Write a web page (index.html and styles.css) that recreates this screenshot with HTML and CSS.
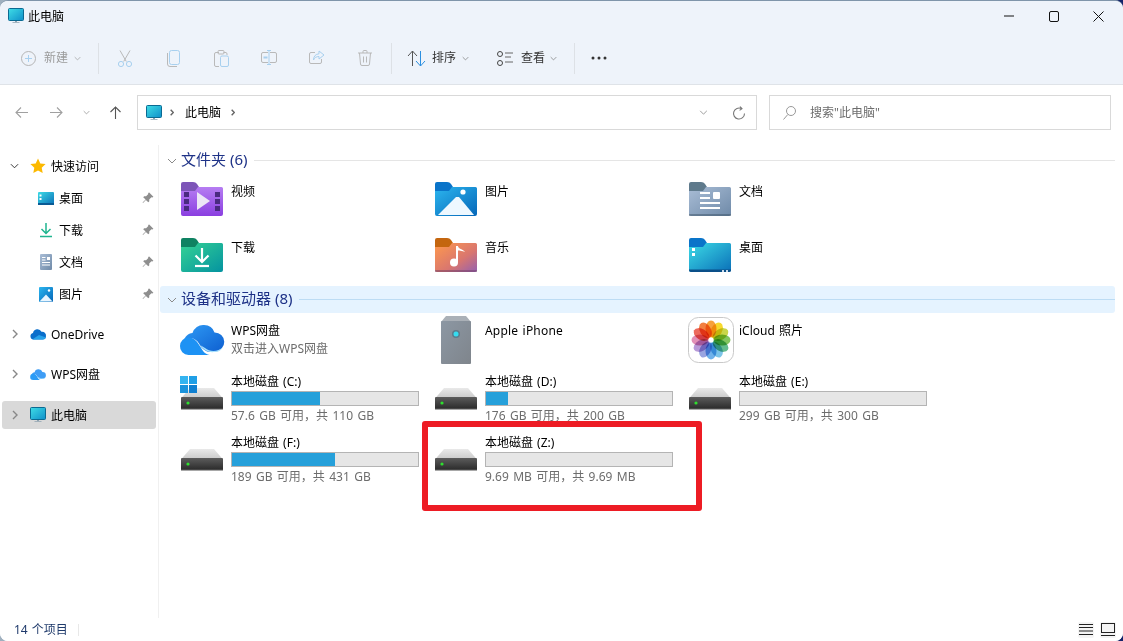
FILE: index.html
```html
<!DOCTYPE html>
<html lang="zh-CN">
<head>
<meta charset="utf-8">
<title>此电脑</title>
<link rel="stylesheet" href="styles.css">
</head>
<body>
<svg class="defs" width="0" height="0" aria-hidden="true">
  <defs>
    <linearGradient id="gPc" x1="0" y1="0" x2="1" y2="1"><stop offset="0" stop-color="#3fdde6"/><stop offset="1" stop-color="#0f8fc9"/></linearGradient>
    <linearGradient id="gDesk" x1="0" y1="0" x2="1" y2="1"><stop offset="0" stop-color="#3cdbe6"/><stop offset="1" stop-color="#0a6fb8"/></linearGradient>
    <linearGradient id="gVid" x1="0" y1="0" x2="0" y2="1"><stop offset="0" stop-color="#b67df2"/><stop offset="1" stop-color="#8a3fe0"/></linearGradient>
    <linearGradient id="gPic" x1="0" y1="0" x2="1" y2="1"><stop offset="0" stop-color="#2cb6ef"/><stop offset="1" stop-color="#0566b8"/></linearGradient>
    <linearGradient id="gDoc" x1="0" y1="0" x2="1" y2="1"><stop offset="0" stop-color="#a9bdd6"/><stop offset="1" stop-color="#6f8aa8"/></linearGradient>
    <linearGradient id="gDl" x1="0" y1="0" x2="1" y2="1"><stop offset="0" stop-color="#35d294"/><stop offset="1" stop-color="#0493a0"/></linearGradient>
    <linearGradient id="gMus" x1="0" y1="0" x2="1" y2="1"><stop offset="0" stop-color="#ff9a4c"/><stop offset=".6" stop-color="#d9766f"/><stop offset="1" stop-color="#9460b0"/></linearGradient>
    <linearGradient id="gDrv" x1="0" y1="0" x2="0" y2="1"><stop offset="0" stop-color="#5c5c5c"/><stop offset="1" stop-color="#262626"/></linearGradient>
    <linearGradient id="gTop" x1="0" y1="0" x2="0" y2="1"><stop offset="0" stop-color="#e9e9e9"/><stop offset="1" stop-color="#c9c9c9"/></linearGradient>
    <linearGradient id="gTow" x1="0" y1="0" x2="1" y2="1"><stop offset="0" stop-color="#8c97a3"/><stop offset="1" stop-color="#7f858c"/></linearGradient>
    <linearGradient id="gCloud" x1="0" y1="0" x2="1" y2="1"><stop offset="0" stop-color="#2f9bf5"/><stop offset="1" stop-color="#0e5fd0"/></linearGradient>
    <symbol id="pc" viewBox="0 0 16 16">
      <path d="M7 12.5h2v1.6H7zM4.5 14.2h7v.8h-7z" fill="#8ea2b0"/>
      <rect x=".5" y=".5" width="15" height="12" rx="1" fill="url(#gPc)" stroke="#0b6a92"/>
    </symbol>
    <symbol id="chev-d" viewBox="0 0 10 6"><path d="M1 1l4 4 4-4" fill="none" stroke="currentColor" stroke-width="1"/></symbol>
    <symbol id="chev-r" viewBox="0 0 6 10"><path d="M1 1l4 4-4 4" fill="none" stroke="currentColor" stroke-width="1.4"/></symbol>
    <symbol id="crumb-r" viewBox="0 0 6 10"><path d="M1 1l4 4-4 4" fill="none" stroke="currentColor" stroke-width="2.200"/></symbol>
    <symbol id="pin" viewBox="0 0 12 12"><path d="M7.2.6l4.2 4.2-1 .7-1-.2-2.2 2.2.1 1.8-1 1L3.9 7.9 1 11 .6 10.6 3.6 7.6 1.2 5.2l1-1 1.9.1 2.2-2.2-.2-1z" fill="#8e8e8e"/></symbol>
    <symbol id="drive" viewBox="0 0 42 22">
      <path d="M9 0h24l9 10.500H0z" fill="url(#gTop)"/>
      <rect y="9" width="42" height="13" rx="1" fill="url(#gDrv)"/>
      <rect x="0" y="20.800" width="42" height="1.200" fill="#a8a8a8"/>
      <circle cx="7" cy="15" r="1.600" fill="#2ee02e"/>
    </symbol>
  </defs>
</svg>

<div class="window">
  <header class="titlebar">
    <svg class="ico16"><use href="#pc"/></svg>
    <span class="title-text">此电脑</span>
    <div class="win-controls">
      <span class="win-btn"><svg width="10" height="10" viewBox="0 0 10 10"><path d="M0 5h10" stroke="#111" stroke-width="1"/></svg></span>
      <span class="win-btn"><svg width="10" height="11" viewBox="0 0 10 11"><rect x=".5" y=".5" width="9" height="10" rx="1.500" fill="none" stroke="#111"/></svg></span>
      <span class="win-btn"><svg width="11" height="11" viewBox="0 0 11 11"><path d="M.5.5l10 10M10.500.5l-10 10" stroke="#111" stroke-width="1"/></svg></span>
    </div>
  </header>

  <div class="toolbar">
    <div class="tb-new">
      <svg width="15" height="15" viewBox="0 0 15 15"><circle cx="7.500" cy="7.500" r="7" fill="none" stroke="#b5b5b5"/><path d="M7.500 4v7M4 7.500h7" stroke="#a8d0ef"/></svg>
      <span class="tb-label dim">新建</span>
      <svg class="tb-chev dim" width="7" height="5"><use href="#chev-d"/></svg>
    </div>
    <span class="tb-sep sep-a"></span>
    <div class="tb-icons">
      <span class="tb-icon"><svg width="16" height="17" viewBox="0 0 16 17"><path d="M3 .5l6.300 11M13 .5L6.700 11.500" fill="none" stroke="#b9b9b9"/><circle cx="4" cy="14" r="2.600" fill="none" stroke="#a8d0ef"/><circle cx="12" cy="14" r="2.600" fill="none" stroke="#a8d0ef"/></svg></span>
      <span class="tb-icon"><svg width="13" height="17" viewBox="0 0 13 17"><path d="M.5 3v11a2.500 2.500 0 0 0 2.500 2.500h7" fill="none" stroke="#b9b9b9"/><rect x="2.500" y=".5" width="10" height="14" rx="2" fill="none" stroke="#a8d0ef"/></svg></span>
      <span class="tb-icon"><svg width="15" height="17" viewBox="0 0 15 17"><path d="M5 2.500H2a1.500 1.500 0 0 0-1.500 1.500v11A1.500 1.500 0 0 0 2 16.500h3M9.500 2.500H12A1.500 1.500 0 0 1 13 4v1" fill="none" stroke="#b9b9b9"/><rect x="4" y=".5" width="6" height="3.500" rx="1" fill="none" stroke="#b9b9b9"/><rect x="6.500" y="6" width="8" height="10.500" rx="1.500" fill="none" stroke="#a8d0ef"/></svg></span>
      <span class="tb-icon"><svg width="16" height="15" viewBox="0 0 16 15"><path d="M9 2.500h5a1.500 1.500 0 0 1 1.500 1.500v7a1.500 1.500 0 0 1-1.500 1.500H9M7 2.500H2A1.500 1.500 0 0 0 .5 4v7A1.500 1.500 0 0 0 2 12.500h5" fill="none" stroke="#b9b9b9"/><path d="M8 .5v14M6 .5h4M6 14.500h4" fill="none" stroke="#a8d0ef"/><rect x="2.500" y="6.500" width="4" height="2" fill="#a8d0ef"/></svg></span>
      <span class="tb-icon"><svg width="16" height="15" viewBox="0 0 16 15"><path d="M6 2.500H2A1.500 1.500 0 0 0 .5 4v8A1.500 1.500 0 0 0 2 13.500h9a1.500 1.500 0 0 0 1.500-1.500V9" fill="none" stroke="#b9b9b9"/><path d="M10 1l5 4-5 4V6.500C7.500 6.500 5.500 7.500 4.500 10c0-3.500 2-6 5.500-6.200z" fill="none" stroke="#a8d0ef"/></svg></span>
      <span class="tb-icon"><svg width="14" height="16" viewBox="0 0 14 16"><path d="M0 3h14M5 3V1.500A1 1 0 0 1 6 .5h2a1 1 0 0 1 1 1V3M1.500 3l1 11a1.500 1.500 0 0 0 1.500 1.500h6A1.500 1.500 0 0 0 11.500 14l1-11M5.500 6.500v6M8.500 6.500v6" fill="none" stroke="#b9b9b9"/></svg></span>
    </div>
    <span class="tb-sep"></span>
    <div class="tb-sort">
      <svg width="18" height="17" viewBox="0 0 18 17"><path d="M1 6l4.500-5L10 6M5.500 1v15" fill="none" stroke="#555"/><path d="M9 11l4.500 5 4.500-5M13.500 1v15" fill="none" stroke="#2b8fe0"/></svg>
      <span class="tb-label">排序</span>
      <svg class="tb-chev" width="7" height="5"><use href="#chev-d"/></svg>
    </div>
    <div class="tb-view">
      <svg width="16" height="15" viewBox="0 0 16 15"><circle cx="3" cy="3" r="2.500" fill="none" stroke="#444"/><circle cx="3" cy="12" r="2.500" fill="none" stroke="#444"/><path d="M8 2h8M8 6h6M8 11h8" stroke="#666"/></svg>
      <span class="tb-label">查看</span>
      <svg class="tb-chev" width="7" height="5"><use href="#chev-d"/></svg>
    </div>
    <span class="tb-sep sep-c"></span>
    <svg class="tb-more" width="16" height="4" viewBox="0 0 16 4"><circle cx="2" cy="2" r="1.500" fill="#333"/><circle cx="8" cy="2" r="1.500" fill="#333"/><circle cx="14" cy="2" r="1.500" fill="#333"/></svg>
  </div>

  <nav class="navbar">
    <span class="nav-btn nb1"><svg width="13" height="11" viewBox="0 0 13 11"><path d="M6 .5l-5 5 5 5M1 5.500h12" fill="none" stroke="#a0a0a0" stroke-width="1.100"/></svg></span>
    <span class="nav-btn nb2"><svg width="13" height="11" viewBox="0 0 13 11"><path d="M7 .5l5 5-5 5M12 5.500H0" fill="none" stroke="#a0a0a0" stroke-width="1.100"/></svg></span>
    <span class="nav-btn nb3"><svg class="grey" width="7" height="5"><use href="#chev-d"/></svg></span>
    <span class="nav-btn nb4"><svg width="11" height="13" viewBox="0 0 11 13"><path d="M.5 6l5-5 5 5M5.500 1v12" fill="none" stroke="#555" stroke-width="1.100"/></svg></span>
    <div class="address">
      <svg class="ico16"><use href="#pc"/></svg>
      <svg class="crumb c1" width="4" height="7"><use href="#crumb-r"/></svg>
      <span class="addr-text">此电脑</span>
      <svg class="crumb c2" width="4" height="7"><use href="#crumb-r"/></svg>
      <svg class="addr-drop grey" width="9" height="5"><use href="#chev-d"/></svg>
      <svg class="addr-refresh" width="12" height="14" viewBox="0 0 12 14"><path d="M8.500 2.600A5.500 5.500 0 1 0 11.500 7.500M7 .5l2 2.200-2.400 1.700" fill="none" stroke="#777" stroke-width="1.100"/></svg>
    </div>
    <div class="search">
      <svg width="13" height="14" viewBox="0 0 13 14"><circle cx="8" cy="5" r="4.500" fill="none" stroke="#999"/><path d="M4.800 8.500L.5 13.500" stroke="#999"/></svg>
      <span class="search-text">搜索"此电脑"</span>
    </div>
  </nav>

  <div class="body-row">
    <aside class="sidebar">
      <div class="side-row">
        <svg class="side-chev dark" width="9" height="6"><use href="#chev-d"/></svg>
        <svg class="side-ico" width="16" height="16" viewBox="0 0 16 16"><path d="M8 .5l2.300 4.900 5.300.7-3.900 3.700 1 5.300L8 12.500l-4.700 2.600 1-5.300L.4 6.100l5.300-.7z" fill="#fcb900"/></svg>
        <span>快速访问</span>
      </div>
      <div class="side-row child">
        <svg class="child-ico" width="16" height="13" viewBox="0 0 16 13"><rect width="16" height="13" rx="1" fill="url(#gDesk)"/><rect y="11" width="16" height="2" fill="#0a5a94"/><rect x="1.500" y="2.500" width="2" height="2" fill="#fff"/><rect x="1.500" y="6" width="2" height="2" fill="#fff"/></svg>
        <span class="child-label">桌面</span>
        <svg class="pin" width="12" height="12"><use href="#pin"/></svg>
      </div>
      <div class="side-row child">
        <svg class="child-ico" width="16" height="16" viewBox="0 0 16 16"><path d="M8 1v10M3.500 7L8 11.500 12.500 7" fill="none" stroke="#1fb58f" stroke-width="1.500"/><path d="M2 14.500h12" stroke="#1fb58f" stroke-width="1.500"/></svg>
        <span class="child-label">下载</span>
        <svg class="pin" width="12" height="12"><use href="#pin"/></svg>
      </div>
      <div class="side-row child">
        <svg class="child-ico" width="16" height="16" viewBox="0 0 16 16"><rect x="2" y="0" width="12" height="16" rx="1" fill="url(#gDoc)"/><path d="M4 3.500h3.500M4 6h3.500M4 8.500h8M4 11h8" stroke="#fff" stroke-width="1"/><rect x="9" y="3" width="3" height="3" fill="#fff"/></svg>
        <span class="child-label">文档</span>
        <svg class="pin" width="12" height="12"><use href="#pin"/></svg>
      </div>
      <div class="side-row child">
        <svg class="child-ico" width="16" height="15" viewBox="0 0 16 15"><rect x="1" y="0" width="14" height="15" rx="1" fill="url(#gPic)"/><path d="M1.500 14.500L8 7.500l6.500 7z" fill="#eaf6ff"/><circle cx="11" cy="3.500" r="1.200" fill="#fff"/></svg>
        <span class="child-label">图片</span>
        <svg class="pin" width="12" height="12"><use href="#pin"/></svg>
      </div>
      <div class="side-row group">
        <svg class="side-chev grey2" width="6" height="10"><use href="#chev-r"/></svg>
        <svg class="side-ico" width="16" height="11" viewBox="0 0 16 11"><path d="M3.500 10.500A3.300 3.300 0 0 1 3 4a4.500 4.500 0 0 1 8.500-1.200A3.800 3.800 0 0 1 16 7a3.500 3.500 0 0 1-3.500 3.500z" fill="#0a6ecb"/><path d="M3.500 10.500a3 3 0 0 1-1-.2L9 6l7 2.500a3.500 3.500 0 0 1-3.500 2z" fill="#27a2ea"/></svg>
        <span>OneDrive</span>
      </div>
      <div class="side-row group">
        <svg class="side-chev grey2" width="6" height="10"><use href="#chev-r"/></svg>
        <svg class="side-ico" width="16" height="11" viewBox="0 0 44 31"><path d="M24 1a11 11 0 0 1 10.500 7.500A9.500 9.500 0 0 1 35 27.500c-8 2-13-2-16-8-3-5-9-7-15-3 1-4 4-7 8.500-7.500A11 11 0 0 1 24 1z" fill="#3f9df5"/><path d="M0 22a8.500 8.500 0 0 1 8.500-8.500c6 0 9 4.500 12 9.500 2 3.500 4 7 9 8H8.500A8.500 8.500 0 0 1 0 22z" fill="#2a9bf6"/><path d="M20 21c3 4 7 8 15 7a9 9 0 0 0 8-5c-5 5-13 5-18 1z" fill="#a7e0fc"/></svg>
        <span>WPS网盘</span>
      </div>
      <div class="side-row group selected">
        <svg class="side-chev grey2" width="6" height="10"><use href="#chev-r"/></svg>
        <svg class="side-ico ico16"><use href="#pc"/></svg>
        <span>此电脑</span>
      </div>
    </aside>

    <main class="content">
      <div class="sec-head">
        <svg class="sec-chev" width="10" height="6"><use href="#chev-d"/></svg>
        <span class="sec-title">文件夹 (6)</span>
        <span class="sec-line"></span>
      </div>
      <div class="folders">
        <div class="tile">
          <svg class="folder" width="42" height="34" viewBox="0 0 42 34"><path d="M0 2a2 2 0 0 1 2-2h10c2 0 3 .8 4 2l2 3v5H0z" fill="#7d55b8"/><path d="M0 9h14l3-4h23.500A1.500 1.500 0 0 1 42 6.500V32a2 2 0 0 1-2 2H2a2 2 0 0 1-2-2z" fill="url(#gVid)"/><g fill="#4a2a80"><rect x="3" y="10" width="5" height="5"/><rect x="3" y="17" width="5" height="5"/><rect x="3" y="24" width="5" height="5"/><rect x="34" y="10" width="5" height="5"/><rect x="34" y="17" width="5" height="5"/><rect x="34" y="24" width="5" height="5"/></g><path d="M16 10l13 9-13 9z" fill="#ece6f6"/></svg>
          <div class="tile-text"><span>视频</span></div>
        </div>
        <div class="tile">
          <svg class="folder" width="42" height="34" viewBox="0 0 42 34"><path d="M0 2a2 2 0 0 1 2-2h10c2 0 3 .8 4 2l2 3v5H0z" fill="#0a74c9"/><path d="M0 9h14l3-4h23.500A1.500 1.500 0 0 1 42 6.500V32a2 2 0 0 1-2 2H2a2 2 0 0 1-2-2z" fill="url(#gPic)"/><path d="M3 33L21 15l3 0 15 18z" fill="#eef8ff"/><circle cx="28" cy="10" r="2.600" fill="#fff"/></svg>
          <div class="tile-text"><span>图片</span></div>
        </div>
        <div class="tile">
          <svg class="folder" width="42" height="34" viewBox="0 0 42 34"><path d="M0 2a2 2 0 0 1 2-2h10c2 0 3 .8 4 2l2 3v5H0z" fill="#5f7a8c"/><path d="M0 9h14l3-4h23.500A1.500 1.500 0 0 1 42 6.500V32a2 2 0 0 1-2 2H2a2 2 0 0 1-2-2z" fill="url(#gDoc)"/><path d="M0 33h42" stroke="#3f5468" stroke-width="1"/><path d="M11 11h10M11 16h10M11 21h20M11 26h20" stroke="#fff" stroke-width="2"/><rect x="24" y="10" width="7" height="7" rx="1" fill="#fff"/></svg>
          <div class="tile-text"><span>文档</span></div>
        </div>
        <div class="tile">
          <svg class="folder" width="42" height="34" viewBox="0 0 42 34"><path d="M0 2a2 2 0 0 1 2-2h10c2 0 3 .8 4 2l2 3v5H0z" fill="#0f8262"/><path d="M0 9h14l3-4h23.500A1.500 1.500 0 0 1 42 6.500V32a2 2 0 0 1-2 2H2a2 2 0 0 1-2-2z" fill="url(#gDl)"/><path d="M21 10v13M14.500 17.500L21 24l6.500-6.500" fill="none" stroke="#fff" stroke-width="2.200"/><path d="M14 28h14" stroke="#fff" stroke-width="2.200"/></svg>
          <div class="tile-text"><span>下载</span></div>
        </div>
        <div class="tile">
          <svg class="folder" width="42" height="34" viewBox="0 0 42 34"><path d="M0 2a2 2 0 0 1 2-2h10c2 0 3 .8 4 2l2 3v5H0z" fill="#c4660f"/><path d="M0 9h14l3-4h23.500A1.500 1.500 0 0 1 42 6.500V32a2 2 0 0 1-2 2H2a2 2 0 0 1-2-2z" fill="url(#gMus)"/><path d="M0 33h42" stroke="#6f3f66" stroke-width="1"/><path d="M21 8h2c0 3 5 3 7 6-3-1-5-1.500-7-1.500V24h-2z" fill="#fff"/><circle cx="19" cy="24.500" r="4" fill="#fff"/></svg>
          <div class="tile-text"><span>音乐</span></div>
        </div>
        <div class="tile">
          <svg class="folder" width="42" height="34" viewBox="0 0 42 34"><path d="M0 2a2 2 0 0 1 2-2h10c2 0 3 .8 4 2l2 3v5H0z" fill="#0a74c9"/><path d="M0 9h14l3-4h23.500A1.500 1.500 0 0 1 42 6.500V32a2 2 0 0 1-2 2H2a2 2 0 0 1-2-2z" fill="url(#gDesk)"/><path d="M0 31.500h42V32a2 2 0 0 1-2 2H2a2 2 0 0 1-2-2z" fill="#0a4f88"/><rect x="3" y="10" width="3" height="3" fill="#fff"/><rect x="3" y="15" width="3" height="3" fill="#fff"/><rect x="33" y="32" width="2" height="2" fill="#cde"/><rect x="37" y="32" width="2" height="2" fill="#cde"/></svg>
          <div class="tile-text"><span>桌面</span></div>
        </div>
      </div>

      <div class="sec-head hot">
        <svg class="sec-chev" width="10" height="6"><use href="#chev-d"/></svg>
        <span class="sec-title">设备和驱动器 (8)</span>
        <span class="sec-line blue"></span>
      </div>
      <div class="drives">
        <div class="tile">
          <svg class="cloud" width="44" height="31" viewBox="0 0 44 31"><path d="M24 1a11 11 0 0 1 10.500 7.500A9.500 9.500 0 0 1 35 27.500c-8 2-13-2-16-8-3-5-9-7-15-3 1-4 4-7 8.500-7.500A11 11 0 0 1 24 1z" fill="url(#gCloud)"/><path d="M0 22a8.500 8.500 0 0 1 8.500-8.500c6 0 9 4.500 12 9.500 2 3.500 4 7 9 8H8.500A8.500 8.500 0 0 1 0 22z" fill="#1d92f4"/><path d="M20 21c3 4 7 8 15 7a9 9 0 0 0 8-5c-5 5-13 5-18 1z" fill="#a7e0fc"/></svg>
          <div class="tile-text"><span>WPS网盘</span><span class="sub">双击进入WPS网盘</span></div>
        </div>
        <div class="tile">
          <svg class="tower" width="30" height="48" viewBox="0 0 30 48"><path d="M5 0h20l5 6H0z" fill="#aab0b7"/><rect y="5" width="30" height="43" rx="1" fill="url(#gTow)"/><circle cx="15" cy="18" r="4" fill="#5c7c8c"/><circle cx="15" cy="18" r="2.500" fill="#35dcf0"/></svg>
          <div class="tile-text"><span class="latin">Apple iPhone</span></div>
        </div>
        <div class="tile">
          <svg class="photos" width="46" height="46" viewBox="0 0 46 46">
            <rect x=".5" y=".5" width="45" height="45" rx="10" fill="#fff" stroke="#c9c9c9"/>
            <g transform="translate(23 23)">
              <ellipse class="petal" cy="-11" rx="5.500" ry="8.500" fill="#f7a23b"/>
              <ellipse class="petal" cy="-11" rx="5.500" ry="8.500" fill="#f7d92e" transform="rotate(30)"/>
              <ellipse class="petal" cy="-11" rx="5.500" ry="8.500" fill="#c9d648" transform="rotate(60)"/>
              <ellipse class="petal" cy="-11" rx="5.500" ry="8.500" fill="#82c55f" transform="rotate(90)"/>
              <ellipse class="petal" cy="-11" rx="5.500" ry="8.500" fill="#62bc8e" transform="rotate(120)"/>
              <ellipse class="petal" cy="-11" rx="5.500" ry="8.500" fill="#7cc4e8" transform="rotate(150)"/>
              <ellipse class="petal" cy="-11" rx="5.500" ry="8.500" fill="#6fb2ea" transform="rotate(180)"/>
              <ellipse class="petal" cy="-11" rx="5.500" ry="8.500" fill="#9aa5e0" transform="rotate(210)"/>
              <ellipse class="petal" cy="-11" rx="5.500" ry="8.500" fill="#b79ad8" transform="rotate(240)"/>
              <ellipse class="petal" cy="-11" rx="5.500" ry="8.500" fill="#e290b6" transform="rotate(270)"/>
              <ellipse class="petal" cy="-11" rx="5.500" ry="8.500" fill="#ec6a5c" transform="rotate(300)"/>
              <ellipse class="petal" cy="-11" rx="5.500" ry="8.500" fill="#f27f3f" transform="rotate(330)"/>
            </g>
            <circle cx="23" cy="23" r="1.200" fill="#fff"/>
          </svg>
          <div class="tile-text"><span>iCloud 照片</span></div>
        </div>
        <div class="tile">
          <svg class="drive" width="42" height="22" viewBox="0 0 42 22">
            <use href="#drive" width="42" height="22"/>
            <g><rect x="-1" y="-12" width="8" height="8" fill="#34b4f0"/><rect x="8" y="-12" width="8" height="8" fill="#1f9fe6"/><rect x="-1" y="-3" width="8" height="8" fill="#1b93dc"/><rect x="8" y="-3" width="8" height="8" fill="#0f7fd0"/></g>
          </svg>
          <div class="tile-text"><span>本地磁盘 (C:)</span><div class="bar"><i class="fill" style="width:47.500%"></i></div><span class="sub">57.6 GB 可用，共 110 GB</span></div>
        </div>
        <div class="tile">
          <svg class="drive" width="42" height="22"><use href="#drive"/></svg>
          <div class="tile-text"><span>本地磁盘 (D:)</span><div class="bar"><i class="fill" style="width:12%"></i></div><span class="sub">176 GB 可用，共 200 GB</span></div>
        </div>
        <div class="tile">
          <svg class="drive" width="42" height="22"><use href="#drive"/></svg>
          <div class="tile-text"><span>本地磁盘 (E:)</span><div class="bar"></div><span class="sub">299 GB 可用，共 300 GB</span></div>
        </div>
        <div class="tile">
          <svg class="drive" width="42" height="22"><use href="#drive"/></svg>
          <div class="tile-text"><span>本地磁盘 (F:)</span><div class="bar"><i class="fill" style="width:55.500%"></i></div><span class="sub">189 GB 可用，共 431 GB</span></div>
        </div>
        <div class="tile">
          <svg class="drive" width="42" height="22"><use href="#drive"/></svg>
          <div class="tile-text"><span>本地磁盘 (Z:)</span><div class="bar"></div><span class="sub">9.69 MB 可用，共 9.69 MB</span></div>
        </div>
      </div>
    </main>
  </div>

  <footer class="status">
    <span class="status-text">14 个项目</span>
    <span class="status-sep"></span>
    <div class="status-views">
      <span class="view-btn"><svg width="14" height="11" viewBox="0 0 14 11"><path d="M0 .5h14M0 3.500h14M0 7h14M0 10.500h14" stroke="#222"/></svg></span>
      <span class="view-btn"><svg width="14" height="13" viewBox="0 0 14 13"><rect x=".5" y=".5" width="13" height="9" fill="none" stroke="#222"/><path d="M0 12.500h14" stroke="#222"/></svg></span>
    </div>
  </footer>

  <div class="highlight"></div>
</div>
</body>
</html>
```

FILE: styles.css
```css
* { box-sizing: border-box; }
html, body { margin: 0; height: 100%; overflow: hidden; }
body {
  background: linear-gradient(90deg, #9fb0bf 0%, #3a4f80 60%, #14246a 100%);
  font-family: "Noto Sans", "Noto Sans CJK SC", sans-serif;
  font-size: 12px;
  color: #000;
}
.defs { display: block; height: 0; width: 0; }
svg { display: block; flex: none; overflow: visible; }
.ico16 { width: 16px; height: 16px; }

.window {
  position: relative;
  width: 1123px;
  height: 641px;
  display: flex;
  flex-direction: column;
  background: #fff;
  border-radius: 8px;
  overflow: hidden;
  border-top: 1px solid #7f95aa;
}

.titlebar {
  height: 30px;
  background: #eef3fa;
  display: flex;
  align-items: center;
  padding-left: 8px;
  gap: 4px;
}
.win-controls { margin-left: auto; display: flex; padding-right: 2px; }
.win-btn { width: 45px; height: 30px; display: flex; align-items: center; justify-content: center; }

.toolbar {
  height: 54px;
  background: #eef3fa;
  border-bottom: 1px solid #dfe3e8;
  display: flex;
  align-items: center;
  padding-left: 21px;
  padding-top: 1px;
}
.tb-new, .tb-sort, .tb-view { display: flex; align-items: center; }
.tb-label { margin-left: 8px; color: #333; line-height: 16px; }
.tb-label.dim { color: #9b9b9b; }
.tb-chev { margin-left: 6px; color: #777; }
.tb-chev.dim { color: #9b9b9b; }
.tb-sep { width: 1px; height: 31px; background: #dde1e6; }
.sep-a { margin-left: 17px; margin-right: 2px; }
.sep-c { margin-left: 17px; }
.tb-icons { display: flex; }
.tb-icons + .tb-sep { margin-left: 2px; }
.tb-icon { width: 48px; display: flex; justify-content: center; }
.tb-sort { margin-left: 15px; }
.tb-sort .tb-label { margin-left: 7px; }
.tb-view { margin-left: 28px; }
.tb-view .tb-chev { margin-left: 5px; }
.tb-more { margin-left: 16px; }

.navbar {
  height: 60px;
  display: flex;
  align-items: flex-start;
  padding: 10px 0 0 4px;
  background: #fff;
}
.nav-btn { height: 35px; display: flex; align-items: center; justify-content: center; }
.nb1 { width: 34px; }
.nb2 { width: 36px; }
.nb3 { width: 24px; }
.nb4 { width: 34px; }
.grey { color: #8a8a8a; }
.address {
  margin-left: 5px;
  width: 620px;
  height: 35px;
  border: 1px solid #d9d9d9;
  display: flex;
  align-items: center;
  padding-left: 8px;
}
.crumb { color: #666; }
.c1 { margin-left: 8px; }
.addr-text { margin-left: 11px; padding-bottom: 2px; }
.c2 { margin-left: 10px; }
.addr-drop { margin-left: auto; }
.addr-refresh { margin-left: 25px; margin-right: 11px; }
.search {
  margin-left: 12px;
  width: 342px;
  height: 35px;
  border: 1px solid #d9d9d9;
  display: flex;
  align-items: center;
  padding-left: 13px;
  gap: 14px;
}
.search-text { color: #6d6d6d; padding-bottom: 2px; }

.body-row { flex: 1; display: flex; min-height: 0; }
.sidebar {
  width: 159px;
  border-right: 1px solid #f0f0f0;
  padding: 7px 2px 0;
  display: flex;
  flex-direction: column;
  gap: 4px;
}
.side-row {
  height: 28px;
  display: flex;
  align-items: center;
  border-radius: 3px;
  padding-left: 8px;
  flex: none;
}
.side-chev { width: 9px; }
.side-chev.dark { color: #222; }
.side-chev.grey2 { color: #888; width: 6px; margin-left: 2px; margin-right: 1px; }
.side-ico { margin-left: 11px; margin-right: 5px; width: 16px; }
.child { padding-left: 36px; }
.child-ico { margin-right: 5px; }
.pin { margin-left: auto; margin-right: 2px; }
.group { margin-top: 8px; }
.selected { background: #d9d9d9; margin-top: 9px; }

.content { flex: 1; padding: 2px 8px 0 1px; min-width: 0; }
.sec-head {
  height: 27px;
  display: flex;
  align-items: center;
  padding-left: 7px;
  border-radius: 3px;
}
.sec-head.hot { background: #e5f3ff; margin-top: 14px; }
.sec-chev { color: #8a8a8a; }
.sec-title { margin-left: 4px; font-size: 15px; line-height: 20px; padding-bottom: 4px; height: 24px; color: #1e3287; white-space: nowrap; }
.sec-line { flex: 1; height: 1px; background: #e5e5e5; margin-left: 7px; }
.sec-line.blue { background: #bcdcf4; }

.folders {
  margin: 8px 0 0 20px;
  display: grid;
  grid-template-columns: repeat(3, 254px);
  grid-template-rows: 34px 34px;
  row-gap: 22px;
}
.drives {
  margin: 3px 0 0 20px;
  display: grid;
  grid-template-columns: repeat(3, 254px);
  grid-template-rows: 47px 52px 52px;
  row-gap: 9px;
}
.tile { display: flex; align-items: flex-start; padding-left: 1px; }
.tile-text { display: flex; flex-direction: column; line-height: 18px; margin-left: 8px; padding-top: 1px; white-space: nowrap; word-spacing: 1px; }
.sub { color: #6d6d6d; word-spacing: 1.25px; }
.latin { letter-spacing: .2px; }
.cloud { margin-top: 8px; margin-left: -1px; margin-right: -1px; }
.tower { margin-left: 6px; margin-right: 6px; }
.photos { margin-left: -1px; margin-top: 1px; margin-right: -3px; }
.petal { mix-blend-mode: multiply; }
.drives .tile:nth-child(-n+3) .tile-text { padding-top: 6px; }
.drive { margin-top: 16px; }
.bar {
  width: 188px;
  height: 15px;
  margin-bottom: 1px;
  background: #e6e6e6;
  border: 1px solid #b4b4b4;
}
.fill { display: block; height: 100%; background: #26a0da; }

.status {
  height: 23px;
  flex: none;
  background: #fff;
  display: flex;
  align-items: center;
  padding-left: 14px;
  color: #1f3a6b;
}
.status-text { word-spacing: 1px; padding-bottom: 2px; }
.status-sep { width: 1px; height: 12px; background: #e8e8e8; margin-left: 10px; }
.status-views { margin-left: auto; display: flex; gap: 6px; margin-right: 7px; }
.view-btn { width: 16px; height: 16px; background: #f4f4f4; border-radius: 2px; display: flex; align-items: center; justify-content: center; }

.highlight {
  position: absolute;
  left: 422px;
  top: 420px;
  width: 280px;
  height: 90px;
  border: 6px solid #ed1c24;
  border-radius: 3px;
}
```
